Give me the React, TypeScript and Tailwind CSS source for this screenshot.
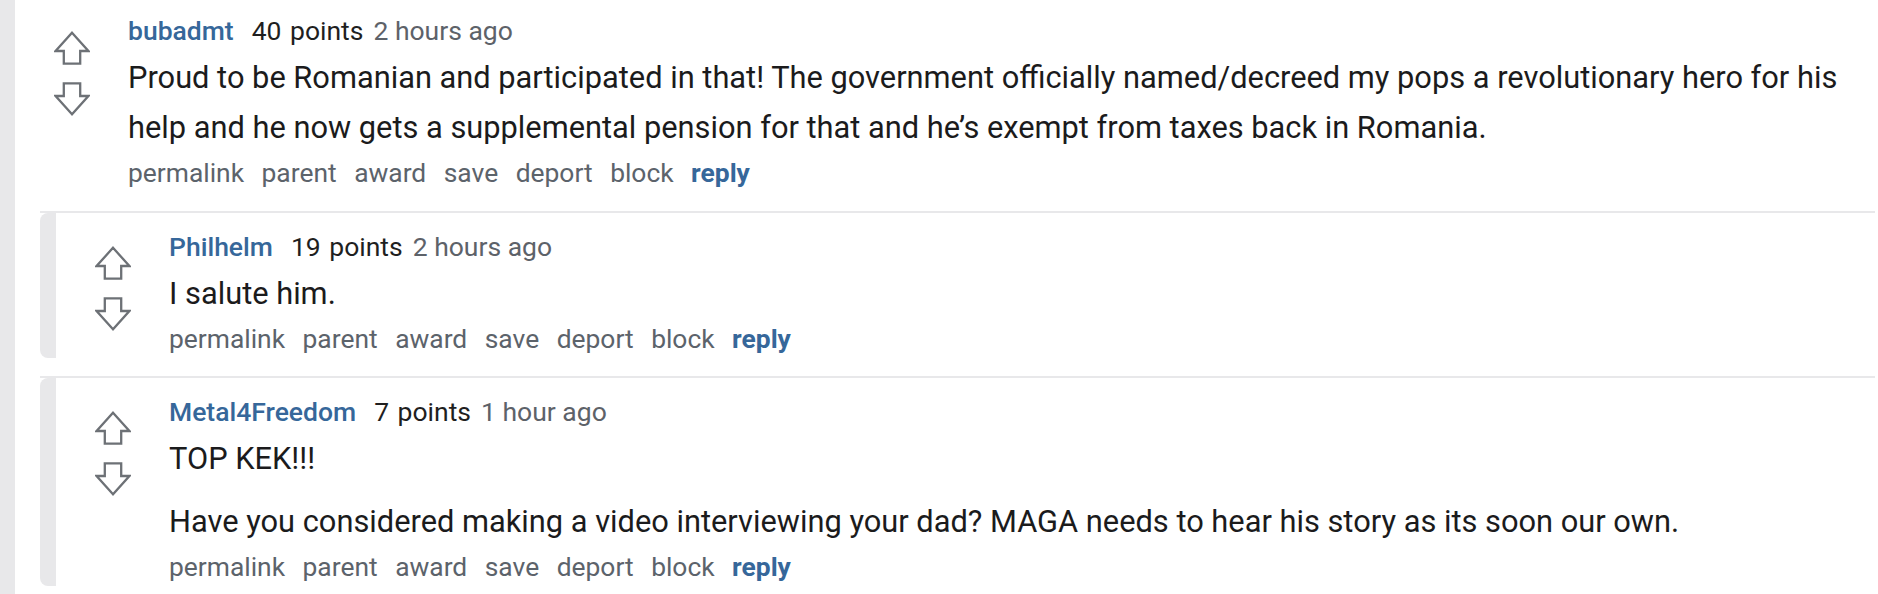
import type { ReactNode } from 'react'

type Comment = {
  author: string
  points: string
  age: string
  body: string[]
}

const ROOT: Comment = {
  author: 'bubadmt',
  points: '40 points',
  age: '2 hours ago',
  body: [
    'Proud to be Romanian and participated in that! The government officially named/decreed my pops a revolutionary hero for his help and he now gets a supplemental pension for that and he’s exempt from taxes back in Romania.',
  ],
}

const REPLIES: Comment[] = [
  {
    author: 'Philhelm',
    points: '19 points',
    age: '2 hours ago',
    body: ['I salute him.'],
  },
  {
    author: 'Metal4Freedom',
    points: '7 points',
    age: '1 hour ago',
    body: [
      'TOP KEK!!!',
      'Have you considered making a video interviewing your dad? MAGA needs to hear his story as its soon our own.',
    ],
  },
]

const ACTIONS = ['permalink', 'parent', 'award', 'save', 'deport', 'block']

function Arrow({ down = false }: { down?: boolean }) {
  return (
    <svg width="36" height="34" viewBox="0 0 36 34" className={down ? 'rotate-180' : ''}>
      <path
        d="M18 1.8 L34.4 20 H26.2 V32.6 H9.8 V20 H1.6 Z"
        fill="none"
        stroke="#6d7176"
        strokeWidth="2.3"
        strokeLinejoin="miter"
      />
    </svg>
  )
}

function Votes({ top }: { top: string }) {
  return (
    <div className={'w-[113px] shrink-0 flex flex-col items-center gap-[17px] ' + top}>
      <Arrow />
      <Arrow down />
    </div>
  )
}

function Entry({ c, wide }: { c: Comment; wide?: boolean }) {
  return (
    <div className={wide ? 'flex-1 pr-[20px]' : 'flex-1'}>
      {/* tagline */}
      <div className="text-[26.5px] leading-[38px] whitespace-nowrap">
        <span className="font-medium text-[#36679a]">{c.author}</span>
        <span className="ml-[18px] text-[#1f1f1f] [word-spacing:2px]">{c.points}</span>
        <span className="ml-[10px] text-[#5d6269]">{c.age}</span>
      </div>

      {/* body */}
      <div className="mt-[3px] text-[30.8px] leading-[50px] text-[#1b1b1c]">
        {c.body.map((p, i) => (
          <p key={i} className={i > 0 ? 'mt-[13px]' : ''}>
            {p}
          </p>
        ))}
      </div>

      {/* buttons */}
      <div className="mt-[5px] flex gap-[17.5px] text-[26.4px] leading-[30px] text-[#5c636b]">
        {ACTIONS.map((a) => (
          <span key={a}>{a}</span>
        ))}
        <span className="font-bold text-[#36679a]">reply</span>
      </div>
    </div>
  )
}

function Child({ c }: { c: Comment }) {
  return (
    <div className="mt-[18px] border-t-2 border-[#e8e8ea]">
      <div className="flex">
        <div className="w-[16px] shrink-0 rounded-l-[8px] bg-[#e8e8ea]" />
        <Votes top="pt-[33px]" />
        <div className="flex-1 pt-[15px] pb-[4px]">
          <Entry c={c} />
        </div>
      </div>
    </div>
  )
}

function Thread({ children }: { children: ReactNode }) {
  return (
    <div className="flex min-h-screen">
      <div className="w-[15px] shrink-0 bg-[#e8e8ea]" />
      <div className="flex-1 flex flex-col">{children}</div>
    </div>
  )
}

export default function App() {
  return (
    <div className="bg-white font-['Roboto','Liberation_Sans',sans-serif] antialiased">
      <Thread>
        <div className="flex">
          <Votes top="pt-[31px]" />
          <div className="flex-1 pt-[12px]">
            <Entry c={ROOT} wide />
          </div>
        </div>
        <div className="mt-[5px] ml-[25px] mr-[3px]">
          {REPLIES.map((r) => (
            <Child key={r.author} c={r} />
          ))}
        </div>
      </Thread>
    </div>
  )
}
